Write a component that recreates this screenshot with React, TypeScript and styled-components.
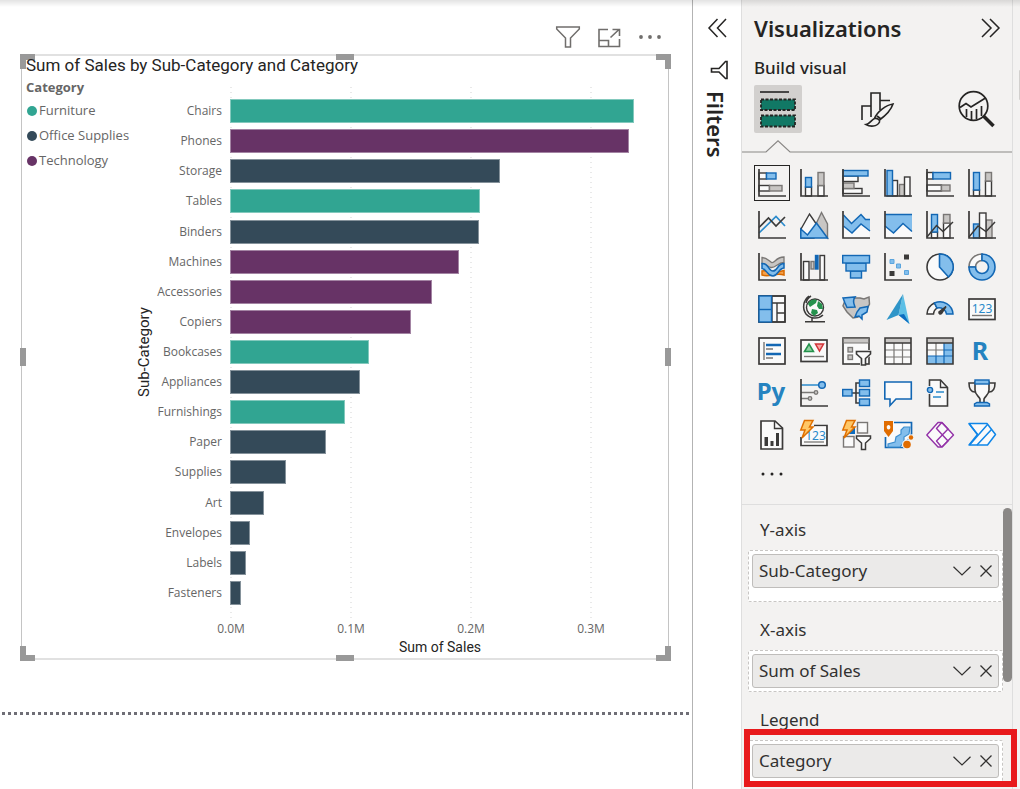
import React from "react";
import styled, { createGlobalStyle, css } from "styled-components";

const ui = `"Noto Sans", "Open Sans", sans-serif`;
const chartText = `"Open Sans", "Noto Sans", sans-serif`;
const din = `Roboto, "Liberation Sans", sans-serif`;

const GlobalStyle = createGlobalStyle`
  *, *::before, *::after { box-sizing: border-box; }
  body { margin: 0; background: #fff; font-family: ${ui}; color: #252423; }
  h1, h2, h3, p, ul { margin: 0; padding: 0; font: inherit; }
  ul { list-style: none; }
  button { font: inherit; color: inherit; background: none; border: 0; padding: 0; cursor: pointer; }
  svg { display: block; overflow: visible; }
`;

/* ---------- Shell ---------- */

const Page = styled.div`
  position: relative;
  display: flex;
  min-height: 100vh;
`;

const TopShadow = styled.div`
  position: absolute;
  inset: 0 0 auto;
  height: 7px;
  background: linear-gradient(rgba(0, 0, 0, 0.11), rgba(0, 0, 0, 0));
  pointer-events: none;
`;

const Canvas = styled.main`
  flex: 1;
  min-width: 0;
  border-right: 1px solid #b3b3b3;
`;

const VisualToolbar = styled.div`
  display: flex;
  justify-content: flex-end;
  gap: 17px;
  height: 54px;
  padding: 25px 30px 0 0;
`;

const ToolButton = styled.button`
  width: 24px;
  height: 24px;
`;

const PageEdge = styled.div`
  height: 3px;
  margin: 52px 2px 0;
  background: repeating-linear-gradient(to right, #6f6e76 0 3px, transparent 3px 6px);
`;

/* ---------- Chart visual ---------- */

const Frame = styled.section`
  position: relative;
  margin: 0 23px 0 21px;
  padding: 0 18px 3px 4px;
  border: solid #c4c4c4;
  border-width: 2px 1px;
  border-top-color: #e1e1e1;
  border-bottom-color: #e1e1e1;
`;

type Edge = "start" | "mid" | "end";

const at = (e: Edge, from: string, to: string) =>
  e === "mid" ? `${from}: calc(50% - 9px);` : e === "start" ? `${from}: -2px;` : `${to}: -3px;`;

const Handle = styled.span<{ $x: Edge; $y: Edge }>`
  position: absolute;
  ${({ $x }) => at($x, "left", "right")}
  ${({ $y }) => at($y, "top", "bottom")}
  ${({ $x, $y }) =>
    $x === "mid"
      ? css`width: 18px; height: 6px; background: #999;`
      : $y === "mid"
      ? css`width: 6px; height: 18px; background: #999;`
      : css`
          width: 15px;
          height: 15px;
          border: 0 solid #999;
          border-${$x === "start" ? "left" : "right"}-width: 6px;
          border-${$y === "start" ? "top" : "bottom"}-width: 6px;
        `}
`;

const ChartTitle = styled.h2`
  position: relative;
  z-index: 1;
  height: 21px;
  font: 400 17px/18px ${din};
  white-space: nowrap;
`;

const ChartBody = styled.div`
  display: flex;
`;

const Legend = styled.div`
  width: 109px;
  color: #666;
  font-family: ${chartText};
  font-size: 13px;
  white-space: nowrap;
`;

const LegendTitle = styled.h3`
  font-weight: 700;
  line-height: 21px;
`;

const LegendItem = styled.li<{ $color: string }>`
  display: flex;
  align-items: center;
  gap: 2px;
  line-height: 25px;
  &::before {
    content: "";
    flex: none;
    width: 10px;
    height: 10px;
    margin-left: 1px;
    border-radius: 50%;
    background: ${({ $color }) => $color};
  }
`;

const Plot = styled.div`
  flex: 1;
  display: grid;
  grid-template-columns: 18px 77px 1fr;
  padding-top: 10px;
`;

const YTitle = styled.div`
  writing-mode: vertical-rl;
  transform: rotate(180deg);
  text-align: center;
  font: 400 15px/18px ${din};
`;

const Bars = styled.ul`
  grid-area: 1 / 2 / 2 / 4;
  display: grid;
  grid-auto-rows: 1fr;
  height: 531px;
  padding: 9px 0 10px;
`;

const BarRow = styled.li`
  display: grid;
  grid-template-columns: 69px 1fr;
  column-gap: 8px;
  align-items: center;
`;

const BarLabel = styled.span`
  text-align: right;
  font-family: ${chartText};
  font-size: 12px;
  line-height: 16px;
  color: #666;
  white-space: nowrap;
`;

const Bar = styled.div<{ $color: string }>`
  height: 24px;
  background: ${({ $color }) => $color};
  border: 1px solid rgba(255, 255, 255, 0.4);
`;

const GridLines = styled.div`
  grid-area: 1 / 3;
  display: grid;
  grid-template-columns: 2fr 2fr 2fr 1fr;
  & > i {
    background: repeating-linear-gradient(#e9e9e9 0 1px, transparent 1px 5px) 0 0 / 2px 100% no-repeat;
  }
`;

const Ticks = styled.div`
  grid-area: 2 / 3;
  display: grid;
  grid-template-columns: 2fr 2fr 2fr 1fr;
  padding-top: 1px;
  font-family: ${chartText};
  font-size: 12px;
  line-height: 20px;
  color: #666;
  & > span {
    width: 40px;
    margin-left: -19px;
    text-align: center;
  }
`;

const XTitle = styled.div`
  grid-area: 3 / 3;
  text-align: center;
  font: 400 14px/16px ${din};
`;

/* ---------- Filters pane ---------- */

const FiltersPane = styled.aside`
  display: flex;
  flex-direction: column;
  align-items: center;
  width: 49px;
  padding-top: 18px;
  border-right: 1px solid #dedede;
`;

const PaneButton = styled.button`
  width: 20px;
  height: 20px;
`;

const FilterIcon = styled.div`
  width: 20px;
  height: 20px;
  margin: 22px 0 11px 4px;
`;

const FiltersTitle = styled.h2`
  writing-mode: vertical-rl;
  margin-right: 2px;
  font-size: 22px;
  font-weight: 600;
  line-height: 24px;
`;

/* ---------- Visualizations pane ---------- */

const VisPane = styled.aside`
  display: flex;
  flex-direction: column;
  width: 271px;
  background: #f3f2f1;
  border-right: 1px solid #dedede;
`;

const PaneHeader = styled.header`
  display: flex;
  align-items: center;
  justify-content: space-between;
  height: 56px;
  padding: 0 12px;
`;

const PaneTitle = styled.h1`
  font-size: 22px;
  font-weight: 600;
  line-height: 32px;
`;

const SubTitle = styled.h2`
  padding: 0 12px;
  font-size: 17px;
  font-weight: 500;
  line-height: 24px;
`;

const Tabs = styled.div`
  display: flex;
  justify-content: space-between;
  padding: 5px 12px 7px;
`;

const Tab = styled.button<{ $active?: boolean }>`
  display: grid;
  place-items: center;
  width: 48px;
  height: 48px;
  border-radius: 2px;
  background: ${({ $active }) => ($active ? "#d2d0ce" : "transparent")};
`;

const Gallery = styled.div`
  display: grid;
  grid-template-columns: repeat(6, 36px);
  justify-content: space-between;
  row-gap: 6px;
  padding: 12px 12px 0;
`;

const VisualButton = styled.button<{ $active?: boolean }>`
  display: grid;
  place-items: center;
  height: 36px;
  border: 1px solid ${({ $active }) => ($active ? "#252423" : "transparent")};
`;

const MoreButton = styled.button`
  width: 28px;
  height: 20px;
  margin: 10px 16px 21px;
`;

const FieldsArea = styled.div`
  display: flex;
  flex: 1;
  border-top: 1px solid #dedede;
`;

const Wells = styled.div`
  flex: 1;
  display: flex;
  flex-direction: column;
  gap: 15px;
  padding: 12px 0 0 6px;
`;

const WellGroup = styled.section`
  position: relative;
  color: #323130;
  font-size: 17px;
`;

const WellLabel = styled.h3`
  padding: 0 12px 7px;
  line-height: 26px;
`;

const Well = styled.div<{ $roomy?: boolean }>`
  padding: 3px;
  padding-bottom: ${({ $roomy }) => ($roomy ? 13 : 3)}px;
  background: #fff;
  border: 1px dashed #c8c6c4;
  border-radius: 2px;
`;

const Pill = styled.div`
  display: flex;
  align-items: center;
  gap: 6px;
  height: 34px;
  padding: 0 4px 0 6px;
  background: #ebeae9;
  border: 1px solid #bfbdbb;
  border-radius: 3px;
`;

const PillName = styled.span`
  flex: 1;
  padding-bottom: 2px;
`;

const PillButton = styled.button<{ $w: number }>`
  display: grid;
  place-items: center;
  width: ${({ $w }) => $w}px;
  height: 20px;
`;

const Highlight = styled.div`
  position: absolute;
  inset: 22px -14px -5px -4px;
  border: 6px solid #e81a1c;
  pointer-events: none;
`;

const ScrollThumb = styled.div`
  width: 9px;
  height: 174px;
  margin-top: 3px;
  border-radius: 5px;
  background: #8a8886;
`;

const EdgeStrip = styled.div`
  width: 7px;
  padding: 70px 0 0 6px;
  background: #f3f2f1;
`;

const EdgeGrip = styled.div`
  height: 30px;
  border-radius: 3px 0 0 3px;
  background: #d2d0ce;
`;

/* ---------- Icon drawings (28 x 28 grid) ---------- */

const D = "#3b3a39";
const B = "#1267b4";
const L = "#83beec";
const G = "#797775";
const M = "#c8c6c4";
const W = "#fafafa";

type BoxProps = { x: number; y: number; r: number; b: number; f?: string; s?: string };
const Box = ({ x, y, r, b, f = W, s = D }: BoxProps) => (
  <rect x={x} y={y} width={r - x} height={b - y} fill={f} stroke={s} strokeWidth={1.400} />
);
const Axis = () => <path d="M1 0V27H28" stroke={D} strokeWidth={1.700} />;
const Bolt = () => <path d="M4.500-.5H13L9.500 6H13L2 17 5 9H.8Z" fill="#ffc766" stroke="#e07000" strokeWidth={1.500} />;

const visuals: [string, React.ReactNode][] = [
  ["Stacked bar chart", <><Box x={1} y={4} r={8.500} b={10} /><Box x={8.500} y={4} r={18} b={10} f={L} s={B} /><Box x={1} y={16.500} r={11.500} b={22} /><Box x={11.500} y={16.500} r={24} b={22} f={M} s={G} /><Axis /></>],
  ["Stacked column chart", <><Box x={5.500} y={18} r={11.500} b={27} /><Box x={5.500} y={8.500} r={11.500} b={18} f={L} s={B} /><Box x={18} y={16.500} r={24} b={27} /><Box x={18} y={3.500} r={24} b={16.500} f={M} s={G} /><Axis /></>],
  ["Clustered bar chart", <><Box x={1} y={7} r={16} b={12.500} /><Box x={1} y={1.500} r={26} b={7} f={L} s={B} /><Box x={1} y={19.500} r={20} b={24.500} /><Box x={1} y={14} r={12} b={19.500} f={M} s={G} /><Axis /></>],
  ["Clustered column chart", <><Box x={8.500} y={11.500} r={13.500} b={27} /><Box x={3} y={1.500} r={8.500} b={27} f={L} s={B} /><Box x={15.500} y={15.500} r={20.500} b={27} f={M} s={G} /><Box x={20.500} y={8} r={26} b={27} /><Axis /></>],
  ["100% stacked bar chart", <><Box x={1} y={3.500} r={7} b={10} /><Box x={7} y={3.500} r={24.500} b={10} f={L} s={B} /><Box x={1} y={16} r={15.500} b={22} /><Box x={15.500} y={16} r={24} b={22} f={M} s={G} /><Axis /></>],
  ["100% stacked column chart", <><Box x={5.500} y={21} r={11.500} b={27} /><Box x={5.500} y={3.500} r={11.500} b={21} f={L} s={B} /><Box x={17.500} y={12} r={23.500} b={27} /><Box x={17.500} y={3.500} r={23.500} b={12} f={M} s={G} /><Axis /></>],

  ["Line chart", <><path d="M1 22 18 5.500 27 15" stroke="#2a8acb" strokeWidth={1.700} /><path d="M1 16.500 10.500 7 18 15 27 6" stroke={D} strokeWidth={1.700} /><Axis /></>],
  ["Area chart", <><path d="M15 15 21.500 1.500 27.500 13V27Z" fill={M} stroke={G} strokeWidth={1.400} /><path d="M1 18 9.500 3 17 14 14 27H1Z" fill={W} stroke={D} strokeWidth={1.400} /><path d="M.8 18 7.500 24 16.500 12 27.500 27H.8Z" fill={L} stroke={B} strokeWidth={1.500} /></>],
  ["Stacked area chart", <><path d="M1 14 10 22.500 19 13 27.500 21V27H1Z" fill={W} /><path d="M1.500 4 9.500 12.500 19 3.500 23.500 8.500H28V20L19 13 10 22 1.500 15Z" fill={L} /><path d="M1.500 4 9.500 12.500 19 3.500 23.500 8.500H28M1.500 15 10 22 19 13 28 20" stroke={B} strokeWidth={1.500} /><Axis /></>],
  ["100% stacked area chart", <><path d="M1 15V27H28V20L19 12.500 9.500 22Z" fill={W} /><path d="M1 3.500H28V20.500L19 12.500 9.500 22 1 15Z" fill={L} /><path d="M1 3.500H28M1 15 9.500 22 19 12.500 28 20.500" stroke={B} strokeWidth={1.500} /><Axis /></>],
  ["Line and stacked column chart", <><Box x={5.500} y={21} r={11.500} b={27} /><Box x={5.500} y={3.500} r={11.500} b={21} f={L} s={B} /><Box x={17.500} y={12} r={24} b={27} /><Box x={17.500} y={3.500} r={24} b={12} f={M} s={G} /><path d="M1 26 10.500 14.500 17 20.500 27 11" stroke={D} strokeWidth={1.500} /><Axis /></>],
  ["Line and clustered column chart", <><Box x={5.500} y={13} r={11.500} b={27} f={L} s={B} /><Box x={18} y={9} r={24} b={27} f={M} s={G} /><Box x={11.500} y={2} r={18} b={27} /><path d="M1 26 10 15 18 20.500 27 11" stroke={D} strokeWidth={1.500} /><Axis /></>],

  ["Ribbon chart", <><path d="M4 18C10 17 16 21 26 17.500V22C17 19 12 25 4 22Z" fill="#f6a04a" stroke="#d86b00" strokeWidth={1.500} /><path d="M4 4.500C12 4.500 12 13 17 8 20 5 22 4 26 4V9.500C20 9 18 15 13 14.500 10 14 8 11 4 10.500Z" fill={M} stroke={G} strokeWidth={1.300} /><path d="M4 10.500C11 10 10 18 15 18 20 18 19 10.500 26 10.500V15C21 15 20 22.500 15 23 9 23 9 16 4 15.500Z" fill={L} stroke={B} strokeWidth={1.500} /><Axis /></>],
  ["Waterfall chart", <><Box x={3.500} y={8.500} r={9} b={27} /><Box x={11} y={8.500} r={14} b={16} f={M} s={G} /><Box x={15.500} y={2.500} r={18} b={16} f={B} s={B} /><Box x={20} y={2.500} r={24.500} b={27} /><Axis /></>],
  ["Funnel", <><Box x={8.500} y={18} r={19.500} b={25} f={L} s={B} /><Box x={4} y={10} r={24} b={18} f={L} s={B} /><Box x={.7} y={2.500} r={27.500} b={10} f={L} s={B} /></>],
  ["Scatter chart", <><path d="M20 1.500h5v5h-5zM5.500 18h5v5h-5z" fill={D} /><path d="M6 6.500h4v4h-4zM12.500 11h4v4h-4zM20.500 17.500h4v4h-4z" fill={L} stroke="#5ba5dd" /><Axis /></>],
  ["Pie chart", <><circle cx={14} cy={14} r={13} fill={W} stroke={D} strokeWidth={1.600} /><path d="M13.500 1A13 13 0 0 1 22.500 24L13.500 14Z" fill={L} stroke={B} strokeWidth={1.600} /></>],
  ["Donut chart", <g strokeWidth={1.600}><path d="M14 1A13 13 0 0 0 1 14H7.500A6.500 6.500 0 0 1 14 7.500Z" fill={W} stroke={G} /><path d="M14 1A13 13 0 1 1 1 14H7.500A6.500 6.500 0 1 0 14 7.500Z" fill={L} stroke={B} /></g>],

  ["Treemap", <><Box x={1} y={1} r={27} b={27} /><path d="M14 8H27M19 8V27M19 18H27M14 1V27" stroke={D} strokeWidth={1.400} /><rect x={1} y={1} width={26} height={26} stroke={D} strokeWidth={1.600} /><Box x={1} y={1} r={13.500} b={27} f={L} s={B} /><path d="M1 14.500H13.500" stroke={B} strokeWidth={1.400} /></>],
  ["Map", <><circle cx={15} cy={12.500} r={8.500} fill={W} stroke={D} strokeWidth={1.400} /><path d="M8 9C10 4 14 4 17 5L16 8 13 10 10 12ZM18 6L22 9 23 14 19 14 17 11ZM12 14L17 15 18 18 14 21 11 18Z" fill="#25924d" /><path d="M9 1A13 13 0 0 0 6 19 12 12 0 0 0 23 20M11 1A11 11 0 0 0 6 8M12 23V26M5 26.700H25" stroke={D} strokeWidth={1.500} /></>],
  ["Filled map", <><path d="M4 3 18 3 22 4 27 2 27.500 9 25 14 19 17 16 22 11 23 5 17 1 11Z" fill={M} stroke={G} strokeWidth={1.500} /><path d="M1 3 13 2C10 6 12 9 13 12L5 12.500 3 8Z" fill={L} stroke={B} strokeWidth={1.500} /><path d="M18 13 26 11.500 25 17 20 20 20 24 17 21 13 22 15 17Z" fill={L} stroke={B} strokeWidth={1.500} /></>],
  ["Azure map", <><path d="M19-1 25.500 29 14.500 20Z" fill="#5cbfe6" /><path d="M14.500 20 20 19 25.500 29Z" fill="#0b6cc0" /><path d="M19-1 2.500 25 14.500 20Z" fill="#2f95c8" /></>],
  ["Gauge", <g strokeWidth={1.500}><path d="M1 19A13 13 0 0 1 8.500 8L11 13A8 8 0 0 0 7.500 19Z" fill={W} stroke={D} /><path d="M8.500 8A13 13 0 0 1 27 19H20.500A7.500 7.500 0 0 0 11 13Z" fill={L} stroke={B} /><path d="M20 11.500 15.500 18.500A1.500 1.500 0 0 1 13 17Z" fill={D} stroke={D} /></g>],
  ["Card", <><rect x={1} y={4} width={26} height={20.500} fill={W} stroke={D} strokeWidth={1.700} /><text x={14} y={17.500} textAnchor="middle" fontSize={12} fill="#2a8acb">123</text><path d="M4 20.500H24" stroke={G} strokeWidth={1.400} /></>],

  ["Multi-row card", <><rect x={1} y={1} width={26} height={26} fill={W} stroke={D} strokeWidth={1.700} /><path d="M6 5V23M8 12H15M8 21H15" stroke={G} strokeWidth={1.400} /><path d="M8 8H23M8 17H23" stroke={B} strokeWidth={2.400} /></>],
  ["KPI", <><rect x={1} y={3} width={26} height={21.500} fill={W} stroke={D} strokeWidth={1.700} /><path d="M4.500 14.500 9 7 13.500 14.500Z" fill="#8fd0a2" stroke="#25924d" strokeWidth={1.500} /><path d="M15.500 7H23.500L19.500 14Z" fill="#f7a3a3" stroke="#d13438" strokeWidth={1.500} /><path d="M4 19.500H24" stroke={G} strokeWidth={1.400} /></>],
  ["Slicer", <><rect x={1} y={1} width={26} height={26} fill={W} stroke={D} strokeWidth={1.600} /><path d="M1.500 1.500H26.500V6H1.500Z" fill={M} stroke={G} /><rect x={6} y={10.500} width={4.500} height={4.500} fill={M} stroke={G} strokeWidth={1.300} /><rect x={6} y={18} width={4.500} height={4.500} fill={M} stroke={G} strokeWidth={1.300} /><path d="M13 13H30V18L24 22V30H18V22L13 18Z" fill="#f3f2f1" /><path d="M14.500 14.500H28.500V17L23.500 21.500V28H19.500V21.500L14.500 17Z" fill={W} stroke={D} strokeWidth={1.600} /></>],
  ["Table", <><rect x={1} y={1} width={26} height={26} fill={W} /><path d="M1 1H27V6H1Z" fill={M} /><path d="M1 13H27M1 20H27M10 6V27M18.500 6V27" stroke={G} strokeWidth={1.200} /><path d="M1 6H27M1 1H27V27H1Z" stroke={D} strokeWidth={1.600} /></>],
  ["Matrix", <><rect x={1} y={1} width={26} height={26} fill={W} /><path d="M1 1H27V6H1Z" fill={M} /><path d="M18 6H27V27H1V19H18Z" fill={L} /><path d="M1 13H18M10 6V19" stroke={G} strokeWidth={1.200} /><path d="M18 6V27M1 19H27M18 13H27M10 19V27" stroke={B} strokeWidth={1.200} /><path d="M1 6H27M1 1H27V27H1Z" stroke={D} strokeWidth={1.600} /></>],
  ["R script visual", <text x={12} y={23} textAnchor="middle" fontSize={25} fontWeight={700} fill="#2583c0">R</text>],

  ["Python visual", <text x={13} y={20.500} textAnchor="middle" fontSize={24} fontWeight={700} fill="#2583c0">Py</text>],
  ["Key influencers", <><path d="M1 6H19" stroke="#2a8acb" strokeWidth={1.500} /><path d="M1 13.500H15M1 19.500H9" stroke={G} strokeWidth={1.400} /><circle cx={22} cy={6} r={3.300} fill={L} stroke={B} strokeWidth={1.500} /><circle cx={16} cy={13.500} r={1.800} fill={M} stroke={G} strokeWidth={1.300} /><circle cx={10} cy={19.500} r={1.800} fill={M} stroke={G} strokeWidth={1.300} /><Axis /></>],
  ["Decomposition tree", <><path d="M10 14H17M17 4H14V24H17" stroke={D} strokeWidth={1.600} /><Box x={.7} y={10.500} r={10} b={17} f={L} s={B} /><Box x={17.500} y={1} r={27.500} b={7.500} f={L} s={B} /><Box x={17.500} y={10.500} r={27.500} b={17} f={L} s={B} /><Box x={17.500} y={20} r={27.500} b={26.500} f={L} s={B} /></>],
  ["Q&A", <path d="M.8 3H27.300V20H12L6 26.500V20H.8Z" fill={W} stroke={B} strokeWidth={1.600} />],
  ["Narrative", <><path d="M3.500 7V1H14.500L21.500 8.500V27H3.500V15" fill={W} stroke={D} strokeWidth={1.600} /><path d="M14.500 1V8.500H21.500" stroke={D} strokeWidth={1.400} /><circle cx={4} cy={11} r={2.600} fill={L} stroke={B} strokeWidth={1.400} /><path d="M10 13H18M7 18H15" stroke="#2a8acb" strokeWidth={1.500} /></>],
  ["Metrics", <><path d="M7 4H1C1 10 3 13 7 13M21 4H27C27 10 25 13 21 13" stroke={D} strokeWidth={1.600} /><path d="M7 3V11C7 16 11 17 12 20V24H16V20C17 17 21 16 21 11V3Z" fill={W} stroke={D} strokeWidth={1.600} /><Box x={7} y={1} r={21} b={5} f={L} s={B} /><path d="M6.500 27V25L9 23.500H19L21.500 25V27Z" fill={L} stroke={B} strokeWidth={1.400} /></>],

  ["Paginated report", <><path d="M3 0H17L24.500 7V28H3Z" fill={W} stroke={D} strokeWidth={1.700} /><path d="M16.500 0V7.500H24.500" stroke={D} strokeWidth={1.400} /><path d="M6.500 16H10V25H6.500ZM12.500 20H15.500V25H12.500ZM18 12H21V25H18Z" fill={D} /></>],
  ["Card (new)", <><path d="M14 4.500H27V24.500H1V16" stroke={D} strokeWidth={1.700} /><path d="M14 5.500H26V23.500H2V17Z" fill={W} /><text x={15.500} y={18.500} textAnchor="middle" fontSize={12} fill="#2a8acb">123</text><path d="M4 21H24" stroke={G} strokeWidth={1.300} /><Bolt /></>],
  ["Slicer (new)", <><path d="M9 7H13V13H7Z" fill="#0b6cc0" /><Box x={15.500} y={1.500} r={25.500} b={12} s={G} /><Box x={1.500} y={15.500} r={12} b={26} s={G} /><path d="M13 13H30V18L25 22V30H18V22L13 18Z" fill="#f3f2f1" /><path d="M14.500 15H28.500V17.500L23.500 22V28.500H19.500V22L14.500 17.500Z" fill={W} stroke={D} strokeWidth={1.500} /><Bolt /></>],
  ["ArcGIS Maps for Power BI", <><path d="M10 1.500H27.500V13L20 26.500H1.500V16" fill={W} stroke={B} strokeWidth={1.700} /><path d="M26 6 20 6 17 9 17 13 12 16 11 21 4 23V26H16L20 21V16L25 13Z" fill={L} stroke="#3d8fd0" strokeWidth={1.200} /><circle cx={23} cy={23.500} r={5} fill="#f3f2f1" /><circle cx={23} cy={23.500} r={3.800} fill="#e06c00" /><circle cx={27} cy={16.500} r={3.200} fill="#f3f2f1" /><circle cx={27} cy={16.500} r={2.200} fill="#e06c00" /><path d="M0 0H9V10L4.500 16 0 10Z" fill="#e06c00" /><path d="M4.500 4a1.800 2.300 0 1 0 .1 0z" fill={W} /></>],
  ["Power Apps", <g stroke="#9332a8" strokeWidth={1.400} strokeLinejoin="round"><path d="M12 1.500H16L27.500 14 16 26H12L.8 14Z" fill={W} /><path d="M15.500 1.800 10.500 7.500 22 20 16 26M15.500 26 10.500 20 22 8 16 1.800" /></g>],
  ["Power Automate", <g stroke="#0f86e8" strokeWidth={1.500} strokeLinejoin="round"><path d="M1 2.500H19L27.500 13.500 19.500 24H1L9.500 13.500Z" fill={W} /><path d="M1.500 24 19.500 3.500M9 24 23.500 8.500M1 2.500 9.500 13.500" /></g>],
];

const Icon = ({ children, size = 28 }: { children: React.ReactNode; size?: number }) => (
  <svg width={size} height={size} viewBox={`0 0 ${size} ${size}`} fill="none" aria-hidden="true">
    {children}
  </svg>
);

/* ---------- Data ---------- */

const colors = { Furniture: "#31a592", "Office Supplies": "#344a59", Technology: "#673366" };
type Category = keyof typeof colors;

const AXIS_MAX = 350;
const sales: [string, number, Category][] = [
  ["Chairs", 336.5, "Furniture"],
  ["Phones", 332.4, "Technology"],
  ["Storage", 225, "Office Supplies"],
  ["Tables", 208.5, "Furniture"],
  ["Binders", 207.8, "Office Supplies"],
  ["Machines", 190.6, "Technology"],
  ["Accessories", 168, "Technology"],
  ["Copiers", 151, "Technology"],
  ["Bookcases", 115.8, "Furniture"],
  ["Appliances", 108.6, "Office Supplies"],
  ["Furnishings", 96, "Furniture"],
  ["Paper", 80, "Office Supplies"],
  ["Supplies", 47, "Office Supplies"],
  ["Art", 28, "Office Supplies"],
  ["Envelopes", 17, "Office Supplies"],
  ["Labels", 13, "Office Supplies"],
  ["Fasteners", 9, "Office Supplies"],
];

const handles: [Edge, Edge][] = [
  ["start", "start"], ["mid", "start"], ["end", "start"], ["start", "mid"],
  ["end", "mid"], ["start", "end"], ["mid", "end"], ["end", "end"],
];

const wells = [
  { label: "Y-axis", field: "Sub-Category", roomy: true },
  { label: "X-axis", field: "Sum of Sales" },
  { label: "Legend", field: "Category", highlighted: true },
];

/* ---------- App ---------- */

const ChartVisual = () => (
  <Frame aria-label="Sum of Sales by Sub-Category and Category">
    {handles.map(([x, y]) => <Handle key={x + y} $x={x} $y={y} />)}
    <ChartTitle>Sum of Sales by Sub-Category and Category</ChartTitle>
    <ChartBody>
      <Legend>
        <LegendTitle>Category</LegendTitle>
        <ul>
          {(Object.keys(colors) as Category[]).map((c) => (
            <LegendItem key={c} $color={colors[c]}>{c}</LegendItem>
          ))}
        </ul>
      </Legend>
      <Plot>
        <YTitle>Sub-Category</YTitle>
        <GridLines><i /><i /><i /><i /></GridLines>
        <Bars>
          {sales.map(([name, value, cat]) => (
            <BarRow key={name}>
              <BarLabel>{name}</BarLabel>
              <Bar $color={colors[cat]} style={{ width: `${(value / AXIS_MAX) * 100}%` }} />
            </BarRow>
          ))}
        </Bars>
        <Ticks><span>0.0M</span><span>0.1M</span><span>0.2M</span><span>0.3M</span></Ticks>
        <XTitle>Sum of Sales</XTitle>
      </Plot>
    </ChartBody>
  </Frame>
);

export default function App() {
  return (
    <>
      <GlobalStyle />
      <Page>
        <Canvas>
          <VisualToolbar>
            <ToolButton aria-label="Filters on this visual">
              <Icon size={24}><path d="M.7 2H23.300V4L14.500 13V22H9.500V13L.7 4Z" stroke="#706e6c" strokeWidth={1.500} /></Icon>
            </ToolButton>
            <ToolButton aria-label="Focus mode">
              <Icon size={24}><path d="M11 4.500H2V21.500H22.500V14M2 15.500H11.500V21.500M13.500 12.500 22 4.500M15.500 4.500H22.500V11" stroke="#706e6c" strokeWidth={1.600} /></Icon>
            </ToolButton>
            <ToolButton aria-label="More options">
              <Icon size={24}><g fill="#706e6c"><circle cx={3} cy={12} r={1.900} /><circle cx={12} cy={12} r={1.900} /><circle cx={21} cy={12} r={1.900} /></g></Icon>
            </ToolButton>
          </VisualToolbar>
          <ChartVisual />
          <PageEdge />
        </Canvas>

        <FiltersPane>
          <PaneButton aria-label="Expand filters">
            <Icon size={20}><path d="M10.500 1 2 10 10.500 19M19 1 10.500 10 19 19" stroke="#252423" strokeWidth={1.500} /></Icon>
          </PaneButton>
          <FilterIcon>
            <Icon size={20}><path d="M18 1.500V18.500H16.500L10 12H2.500V8.500H10L16.500 1.500Z" stroke="#252423" strokeWidth={1.600} /></Icon>
          </FilterIcon>
          <FiltersTitle>Filters</FiltersTitle>
        </FiltersPane>

        <VisPane>
          <PaneHeader>
            <PaneTitle>Visualizations</PaneTitle>
            <PaneButton aria-label="Collapse pane">
              <Icon size={20}><path d="M2 1 11 10 2 19M10 1 19 10 10 19" stroke="#252423" strokeWidth={1.500} /></Icon>
            </PaneButton>
          </PaneHeader>
          <SubTitle>Build visual</SubTitle>
          <Tabs>
            <Tab $active aria-label="Build visual">
              <Icon size={36}>
                <path d="M0 1H29" stroke="#252423" strokeWidth={1.600} />
                <rect x={1} y={8.500} width={34} height={10.500} fill="#117865" stroke="#252423" strokeWidth={1.800} strokeDasharray="3 1.500" />
                <rect x={1} y={24.500} width={34} height={11} fill="#117865" stroke="#252423" strokeWidth={1.800} strokeDasharray="3 1.500" />
              </Icon>
            </Tab>
            <Tab aria-label="Format visual">
              <Icon size={36}>
                <g stroke="#252423" strokeWidth={1.600}>
                  <path d="M3 29V15H12V26M12 15V2H21V19M21 9.500H31" />
                  <path d="M15.500 27.500C18 21 27 14 34 13 32 19 26 25 20.500 29" fill="#f3f2f1" />
                  <path d="M7 33.500C11 33 12 29 15.500 27.500 19 27 21 29 20.500 31 18 36 11 36 7 33.500Z" fill="#f3f2f1" />
                  <path d="M18 25 22 28" />
                </g>
              </Icon>
            </Tab>
            <Tab aria-label="Analytics">
              <Icon size={36}>
                <g stroke="#252423" strokeWidth={1.700}>
                  <circle cx={15.500} cy={15} r={14.300} />
                  <path d="M2 16.500 8 12.500 13 16 27.500 7M8.500 18V26M13.500 20V29M18.500 18V28M23.500 15V25" />
                  <path d="M25.500 25 35.500 35" strokeWidth={3.500} />
                </g>
              </Icon>
            </Tab>
          </Tabs>
          <svg width="270" height="13" viewBox="0 0 270 13" fill="none" aria-hidden="true">
            <path d="M0 12H24L36 .8 48 12H270" stroke="#8a8886" strokeWidth={1.200} />
          </svg>
          <Gallery>
            {visuals.map(([name, art], i) => (
              <VisualButton key={name} $active={i === 0} aria-label={name}>
                <Icon>{art}</Icon>
              </VisualButton>
            ))}
          </Gallery>
          <MoreButton aria-label="Get more visuals">
            <svg width="28" height="20" fill="#252423" aria-hidden="true"><circle cx={5} cy={11} r={1.500} /><circle cx={14} cy={11} r={1.500} /><circle cx={23} cy={11} r={1.500} /></svg>
          </MoreButton>
          <FieldsArea>
            <Wells>
              {wells.map((w) => (
                <WellGroup key={w.label}>
                  <WellLabel>{w.label}</WellLabel>
                  <Well $roomy={w.roomy}>
                    <Pill>
                      <PillName>{w.field}</PillName>
                      <PillButton $w={20} aria-label={`${w.field} options`}>
                        <svg width="18" height="10" fill="none"><path d="M.5.8 9 9 17.500.8" stroke="#323130" strokeWidth={1.200} /></svg>
                      </PillButton>
                      <PillButton $w={16} aria-label={`Remove ${w.field}`}>
                        <svg width="12" height="12" fill="none"><path d="M.5.5 11.500 11.500M11.500.5.5 11.500" stroke="#323130" strokeWidth={1.300} /></svg>
                      </PillButton>
                    </Pill>
                  </Well>
                  {w.highlighted && <Highlight />}
                </WellGroup>
              ))}
            </Wells>
            <ScrollThumb />
          </FieldsArea>
        </VisPane>
        <EdgeStrip><EdgeGrip /></EdgeStrip>
        <TopShadow />
      </Page>
    </>
  );
}
